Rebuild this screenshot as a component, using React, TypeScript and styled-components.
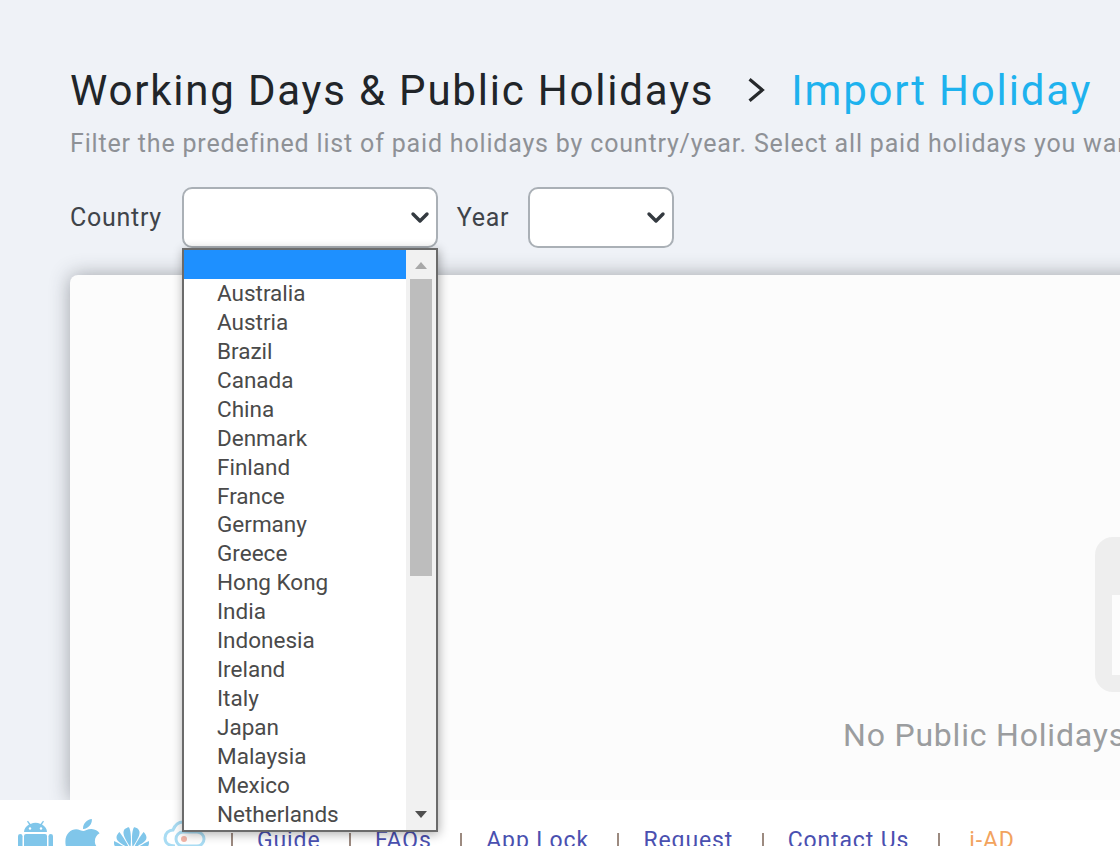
import React from "react";
import styled, { createGlobalStyle } from "styled-components";
import { FaApple } from "react-icons/fa";
import { SiHuawei } from "react-icons/si";

const Global = createGlobalStyle`
  html, body { margin: 0; padding: 0; height: 100%; overflow: hidden; }
  body { font-family: Roboto, "Liberation Sans", sans-serif; }
`;

const Page = styled.div`
  width: 1120px;
  height: 846px;
  overflow: hidden;
  position: relative;
  background: #eff2f7;
  display: flex;
  flex-direction: column;
`;

const Main = styled.main`
  flex: 1;
  min-height: 0;
  overflow: hidden;
  display: flex;
  flex-direction: column;
  padding: 67px 0 0 70px;
`;

const TitleRow = styled.div`
  display: flex;
  align-items: center;
  height: 46px;
  white-space: nowrap;
  font-size: 42px;
  letter-spacing: 1.8px;
  color: #212529;
`;

const Chevron = styled.svg`
  width: 22px;
  height: 32px;
  margin: 0 23px 0 32px;
  flex: none;
`;

const Crumb = styled.span`
  color: #1eb2ee;
`;

const Subtitle = styled.p`
  margin: 16px 0 0;
  font-size: 25px;
  line-height: 30px;
  letter-spacing: 0.82px;
  color: #8e9196;
  white-space: nowrap;
`;

const Filters = styled.div`
  display: flex;
  align-items: center;
  margin-top: 29px;
  height: 60px;
  font-size: 25px;
  letter-spacing: 0.72px;
  color: #3f444a;
`;

const FieldLabel = styled.span<{ $gap: number }>`
  margin-right: ${(p) => p.$gap}px;
  margin-top: -2px;
`;

const SelectBox = styled.div<{ $width: number; $gap: number }>`
  width: ${(p) => p.$width}px;
  height: 61px;
  margin-top: -1px;
  margin-right: ${(p) => p.$gap}px;
  box-sizing: border-box;
  border: 2px solid #aab0b6;
  border-radius: 10px;
  background: #fff;
  display: flex;
  align-items: center;
  justify-content: flex-end;
  padding-right: 6px;
`;

const Caret = styled.svg`
  width: 20px;
  height: 14px;
`;

const Card = styled.section`
  margin-top: 27px;
  flex: 1;
  width: 1300px;
  box-sizing: border-box;
  background: #fcfcfc;
  border-radius: 8px 8px 0 0;
  box-shadow: 0 0 20px rgba(50, 55, 65, 0.42);
  padding: 262px 0 0 773px;
  display: flex;
  flex-direction: column;
`;

const EmptyIcon = styled.div`
  margin-left: 252px;
  width: 150px;
  height: 155px;
  box-sizing: border-box;
  border-radius: 18px;
  background: #eeeeee;
  padding: 58px 17px 17px;
  flex: none;
`;

const EmptyIconInner = styled.div`
  height: 80px;
  background: #fcfcfc;
`;

const EmptyText = styled.div`
  margin-top: 23px;
  font-size: 32px;
  line-height: 40px;
  letter-spacing: 0.8px;
  color: #9b9d9f;
  white-space: nowrap;
`;

const Footer = styled.footer`
  height: 46px;
  flex: none;
  background: #fff;
  position: relative;
  z-index: 2;
  display: flex;
  align-items: flex-start;
  padding: 17px 0 0 17px;
  box-sizing: border-box;
  overflow: hidden;
  white-space: nowrap;
`;

const Platforms = styled.div`
  display: flex;
  align-items: flex-start;
  color: #80c6ea;
  width: 214px;
  height: 60px;
  flex: none;
  line-height: 0;
`;

const PlatformIcon = styled.span<{ $left: number; $top: number }>`
  display: block;
  flex: none;
  margin-left: ${(p) => p.$left}px;
  margin-top: ${(p) => p.$top}px;
`;

const FooterLink = styled.a<{ $accent?: boolean }>`
  font-size: 23px;
  line-height: 44px;
  margin: 2px 28.4px 0 ${(p) => (p.$accent ? "5.5px" : "0")};
  letter-spacing: 0.88px;
  color: ${(p) => (p.$accent ? "#f2a35e" : "#4a50b0")};
  text-decoration: none;
`;

const Sep = styled.span`
  width: 2px;
  height: 30px;
  margin: 16px 24px 0 0;
  background: #9c8a80;
  flex: none;
`;

const Listbox = styled.div`
  position: absolute;
  left: 182px;
  top: 248px;
  width: 256px;
  height: 584px;
  box-sizing: border-box;
  border: 2px solid #6b6b6b;
  background: #fff;
  z-index: 5;
  display: flex;
  box-shadow: 1px 2px 10px rgba(0, 0, 0, 0.32);
`;

const Options = styled.ul`
  flex: 1;
  margin: 0;
  padding: 0;
  list-style: none;
  overflow: hidden;
`;

const Option = styled.li<{ $selected?: boolean }>`
  height: 28.94px;
  padding-left: 33px;
  font-size: 22.5px;
  line-height: 29px;
  color: #4a4a4a;
  background: ${(p) => (p.$selected ? "#1e90ff" : "transparent")};
`;

const Scrollbar = styled.div`
  width: 30px;
  flex: none;
  background: #f1f1f1;
  display: flex;
  flex-direction: column;
  align-items: center;
  padding-top: 11px;
  box-sizing: border-box;
`;

const ArrowIcon = styled.svg<{ $push?: boolean }>`
  width: 14px;
  height: 9px;
  flex: none;
  margin-top: ${(p) => (p.$push ? "auto" : "0")};
  margin-bottom: ${(p) => (p.$push ? "11px" : "0")};
`;

const Thumb = styled.div`
  width: 22px;
  height: 297px;
  margin-top: 9px;
  background: #bdbdbd;
  flex: none;
`;

const countries = [
  "",
  "Australia",
  "Austria",
  "Brazil",
  "Canada",
  "China",
  "Denmark",
  "Finland",
  "France",
  "Germany",
  "Greece",
  "Hong Kong",
  "India",
  "Indonesia",
  "Ireland",
  "Italy",
  "Japan",
  "Malaysia",
  "Mexico",
  "Netherlands",
];

const links = ["Guide", "FAQs", "App Lock", "Request", "Contact Us"];

const SelectCaret = () => (
  <Caret viewBox="0 0 20 14" fill="none" stroke="#343a40" strokeWidth="3.4" strokeLinecap="round" strokeLinejoin="round">
    <path d="M3 3l7 7 7-7" />
  </Caret>
);

const AndroidRobot = () => (
  <svg width="35" height="44" viewBox="0 0 35 44" fill="currentColor">
    <path d="M6 12c0-3 2-6 5-7.500L9 1.500l1-.800 2.500 3.200a13 13 0 0 1 10 0L25 .700l1 .800-2 3c3 1.500 5 4.500 5 7.500z" />
    <rect x="6" y="14" width="23" height="22" rx="2" />
    <rect x="0" y="14" width="4.500" height="17" rx="2.250" />
    <rect x="30.500" y="14" width="4.500" height="17" rx="2.250" />
    <circle cx="12" cy="8.500" r="1.200" fill="#fff" />
    <circle cx="23" cy="8.500" r="1.200" fill="#fff" />
  </svg>
);

const CloudLink = () => (
  <svg width="46" height="36" viewBox="0 0 46 36" fill="none" stroke="#a9dcf3" strokeWidth="3">
    <path d="M13 26c-6 0-10-3-10-8s4-8 8-8c2-5 6-8 10-8 5 0 9 3 10 8" />
    <rect x="14" y="12" width="28" height="14" rx="7" />
    <circle cx="22" cy="19" r="3" fill="#f2b5a8" stroke="none" />
  </svg>
);

export default function App() {
  return (
    <Page>
      <Global />
      <Main>
        <TitleRow>
          Working Days &amp; Public Holidays
          <Chevron viewBox="0 0 20 30" fill="none" stroke="#26292c" strokeWidth="3">
            <path d="M3 5l12 10L3 25" />
          </Chevron>
          <Crumb>Import Holiday</Crumb>
        </TitleRow>
        <Subtitle>
          Filter the predefined list of paid holidays by country/year. Select all paid holidays you want to import.
        </Subtitle>
        <Filters>
          <FieldLabel $gap={20.500}>Country</FieldLabel>
          <SelectBox $width={256} $gap={18.500}>
            <SelectCaret />
          </SelectBox>
          <FieldLabel $gap={18.500}>Year</FieldLabel>
          <SelectBox $width={146} $gap={0}>
            <SelectCaret />
          </SelectBox>
        </Filters>
        <Card>
          <EmptyIcon>
            <EmptyIconInner />
          </EmptyIcon>
          <EmptyText>No Public Holidays Found</EmptyText>
        </Card>
      </Main>
      <Footer>
        <Platforms>
          <PlatformIcon $left={1} $top={3}>
            <AndroidRobot />
          </PlatformIcon>
          <PlatformIcon $left={6} $top={-1}>
            <FaApple size={48} />
          </PlatformIcon>
          <PlatformIcon $left={7} $top={6}>
            <SiHuawei size={35} />
          </PlatformIcon>
          <PlatformIcon $left={13} $top={3}>
            <CloudLink />
          </PlatformIcon>
        </Platforms>
        <Sep />
        {links.map((l) => (
          <React.Fragment key={l}>
            <FooterLink href="#">{l}</FooterLink>
            <Sep />
          </React.Fragment>
        ))}
        <FooterLink href="#" $accent>
          i-AD
        </FooterLink>
      </Footer>
      <Listbox>
        <Options>
          {countries.map((c, i) => (
            <Option key={c} $selected={i === 0}>
              {c}
            </Option>
          ))}
        </Options>
        <Scrollbar>
          <ArrowIcon viewBox="0 0 14 9">
            <path d="M7 1l6 7H1z" fill="#a8a8a8" />
          </ArrowIcon>
          <Thumb />
          <ArrowIcon viewBox="0 0 14 9" $push>
            <path d="M1 1h12L7 8z" fill="#4f4f4f" />
          </ArrowIcon>
        </Scrollbar>
      </Listbox>
    </Page>
  );
}
